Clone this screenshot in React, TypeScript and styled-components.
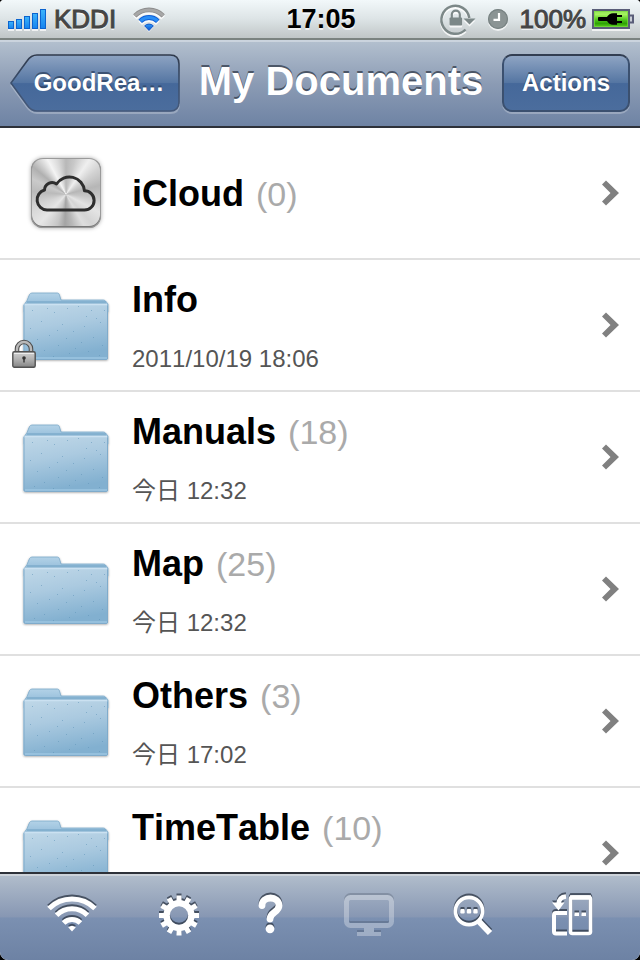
import React from "react";
import styled, { createGlobalStyle, css } from "styled-components";

const GlobalStyle = createGlobalStyle`
  *, *::before, *::after { box-sizing: border-box; }
  body { margin: 0; background: #000; }
  button { font: inherit; font-kerning: inherit; color: inherit; border: 0; padding: 0; background: none; cursor: pointer; }
`;

const Screen = styled.div`
  display: flex;
  flex-direction: column;
  height: 100vh;
  overflow: hidden;
  border-radius: 4px 4px 8px 8px;
  background: #fff;
  font-family: "Liberation Sans", Arial, "Noto Sans CJK JP", sans-serif;
`;

/* ---------- status bar ---------- */

const StatusBar = styled.div`
  flex: none;
  display: grid;
  grid-template-columns: 1fr auto 1fr;
  align-items: center;
  height: 40px;
  padding: 0 6px 0 8px;
  background: linear-gradient(#f2f8fa, #dde4e6 50%, #c0c6c7);
  border-bottom: 2px solid #7b8380;
`;

const StatusGroup = styled.div<{ $end?: boolean }>`
  display: flex;
  align-items: center;
  justify-content: ${(p) => (p.$end ? "flex-end" : "flex-start")};
  gap: ${(p) => (p.$end ? 0 : 8)}px;
  svg { display: block; flex: none; overflow: visible; }
`;

const StatusText = styled.span`
  font-size: 26px;
  line-height: 38px;
  color: #454545;
  -webkit-text-stroke: 1px #454545;
  text-shadow: 0 2px 0 rgba(255, 255, 255, 0.7);
`;

const Clock = styled.span`
  font-size: 27px;
  font-weight: bold;
  line-height: 38px;
  color: #000;
  text-shadow: 0 2px 0 rgba(255, 255, 255, 0.7);
`;

/* ---------- navigation bar ---------- */

const NavBar = styled.header`
  flex: none;
  display: flex;
  align-items: flex-start;
  height: 88px;
  padding: 12px 10px 0;
  background: linear-gradient(#b2bfce, #8b9bb4 50%, #6e83a4);
  border-top: 2px solid #cbd4de;
  border-bottom: 2px solid #2d3139;
`;

const Title = styled.h1`
  flex: 1;
  margin: 0;
  text-align: center;
  white-space: nowrap;
  font-size: 40px;
  line-height: 54px;
  font-weight: bold;
  color: #fff;
  text-shadow: 0 -2px 0 rgba(50, 60, 75, 0.75);
`;

const navText = css`
  flex: none;
  height: 58px;
  font-size: 24px;
  font-weight: bold;
  line-height: 56px;
  color: #fff;
  text-shadow: 0 -2px 0 rgba(45, 65, 95, 0.75);
`;

const ActionButton = styled.button`
  && {
    ${navText}
    width: 128px;
    border: 2px solid #3b506f;
    border-top-color: #323e52;
    border-radius: 10px;
    line-height: 52px;
    background: linear-gradient(#8ea4c3, #5475a2 50%, #45689a 51%, #4b6d9d);
    box-shadow: 0 2px 0 rgba(255, 255, 255, 0.25);
  }
`;

const BackButton = styled.button`
  && {
    ${navText}
    position: relative;
    width: 170px;
    padding: 0 14px 0 22px;
  }
  svg { position: absolute; inset: 0; overflow: visible; }
  span { position: relative; }
`;

/* ---------- list ---------- */

const List = styled.ul`
  flex: 1;
  min-height: 0;
  margin: 0;
  padding: 0;
  list-style: none;
  overflow-y: auto;
  scrollbar-width: none;
`;

const Row = styled.li`
  border-bottom: 2px solid #e0e0e0;
`;

const RowButton = styled.button`
  && {
    display: grid;
    grid-template-columns: 132px 1fr 40px;
    align-items: center;
    width: 100%;
    height: 130px;
    text-align: left;
  }
`;

const IconCell = styled.span`
  display: flex;
  justify-content: center;
`;

const IconFrame = styled.span`
  position: relative;
  svg { display: block; overflow: visible; }
`;

const LockBadge = styled.span`
  position: absolute;
  left: -8px;
  bottom: -5px;
`;

const CloudTile = styled.span`
  display: block;
  width: 70px;
  height: 70px;
  border-radius: 12px;
  background: conic-gradient(
    from 0deg at 50% 52%,
    #b8b8b8 0deg, #c8c8c8 14deg, #efefef 34deg, #d2d2d2 52deg, #b6b6b6 75deg, #c6c6c6 95deg,
    #e4e4e4 118deg, #d4d4d4 138deg, #dedede 150deg, #b8b8b8 168deg, #a4a4a4 182deg, #c6c6c6 196deg,
    #e6e6e6 222deg, #d4d4d4 250deg, #bababa 275deg, #cacaca 295deg, #b0b0b0 310deg, #f4f4f4 332deg,
    #dadada 346deg, #b8b8b8 360deg
  );
  box-shadow: inset 0 0 0 1px #9a9a9a, inset 0 -1px 0 1px #777, 0 0 4px rgba(0, 0, 0, 0.35);
`;

const Labels = styled.span`
  display: flex;
  flex-direction: column;
  gap: 22px;
  padding-top: 2px;
  white-space: nowrap;
  font-kerning: none;
`;

const Name = styled.span`
  font-size: 36px;
  line-height: 44px;
  font-weight: bold;
  color: #000;
`;

const Count = styled.span`
  margin-left: 12px;
  font-size: 34px;
  font-weight: normal;
  color: #aaa;
`;

const Stamp = styled.span`
  min-height: 30px;
  font-size: 24px;
  line-height: 30px;
  color: #555;
`;

/* ---------- bottom toolbar ---------- */

const Toolbar = styled.footer`
  flex: none;
  display: flex;
  align-items: center;
  justify-content: space-between;
  height: 88px;
  padding: 0 48px 4px 46px;
  border-top: 2px solid #2d3139;
  box-shadow: inset 0 2px 0 #cdd3da;
  background: linear-gradient(#b2becc, #8797b3 50%, #7b90b1 51%, #6d82a4);
`;

const ToolButton = styled.button`
  svg {
    display: block;
    overflow: visible;
    filter: drop-shadow(0 -2px 0 rgba(50, 60, 75, 0.8));
  }
  &:disabled { opacity: 0.3; cursor: default; }
`;

/* ---------- drawings ---------- */

const SignalBars = () => (
  <svg width="38" height="22" viewBox="0 0 38 22" aria-label="Signal">
    <defs>
      <linearGradient id="sig" x1="0" y1="0" x2="0" y2="1">
        <stop offset="0" stopColor="#3cb4fb" />
        <stop offset="1" stopColor="#1583ee" />
      </linearGradient>
    </defs>
    {[8, 10, 13, 16, 20].map((h, i) => (
      <g key={h}>
        <rect x={i * 8} y={23 - h} width="6" height={h} fill="#fff" opacity=".7" />
        <rect x={i * 8 + 0.5} y={21.5 - h} width="5" height={h - 1} fill="url(#sig)" stroke="#0b64cf" />
      </g>
    ))}
  </svg>
);

const StatusWifi = () => (
  <svg width="34" height="26" viewBox="0 0 34 26" aria-label="Wi-Fi">
    <defs>
      <linearGradient id="wf" x1="0" y1="0" x2="0" y2="1">
        <stop offset="0" stopColor="#2f9cf8" />
        <stop offset="1" stopColor="#0a50cd" />
      </linearGradient>
    </defs>
    <g fill="none" stroke="#fff" strokeWidth="5" opacity=".8" transform="translate(0 2)">
      <path d="M2.8 9.8A20 20 0 0 1 31.2 9.8" />
      <path d="M8.2 15.2A12.5 12.5 0 0 1 25.8 15.2" />
    </g>
    <path d="M2.8 9.8A20 20 0 0 1 31.2 9.8" fill="none" stroke="#8c8c8c" strokeWidth="4.6" />
    <path d="M2.8 9.8A20 20 0 0 1 31.2 9.8" fill="none" stroke="#a7a7a7" strokeWidth="3" />
    <path d="M8.2 15.2A12.5 12.5 0 0 1 25.8 15.2" fill="none" stroke="#0f5fd8" strokeWidth="5" />
    <path d="M8.6 14.8A12.5 12.5 0 0 1 25.4 14.8" fill="none" stroke="#2a8ef5" strokeWidth="3" />
    <path d="M17 26L11.2 19.6A8.4 8.4 0 0 1 22.8 19.6Z" fill="#fff" opacity=".8" />
    <path d="M17 24.5L12.6 19.8A6.4 6.4 0 0 1 21.4 19.8Z" fill="url(#wf)" stroke="#0b50c4" />
  </svg>
);

const OrientationLock = () => (
  <svg width="36" height="32" viewBox="0 0 36 32" aria-label="Orientation lock">
    {["#fff", "#7c8888"].map((c, i) => (
      <g key={c} transform={`translate(0 ${i ? 0 : 2})`} opacity={i ? 1 : 0.8}>
        <path d="M25.5 26.5A14 14 0 1 1 29.3 15" fill="none" stroke={c} strokeWidth="2.5" />
        <path d="M23.5 15.5H35.5L29.5 21.5Z" fill={c} />
        <path d="M11.8 15V11.6A4 4 0 0 1 19.8 11.6V15" fill="none" stroke={c} strokeWidth="2.2" />
        <rect x="9.5" y="14.5" width="12.6" height="8" rx="1" fill={c} />
      </g>
    ))}
  </svg>
);

const AlarmClock = () => (
  <svg width="44" height="22" viewBox="0 0 44 22" aria-label="Alarm">
    <circle cx="22" cy="13" r="10" fill="#fff" opacity=".7" />
    <circle cx="22" cy="11" r="10" fill="#8b9494" />
    <circle cx="22" cy="11" r="9.4" fill="none" stroke="#788383" strokeWidth="1.2" />
    <path d="M23 5V11.8H17.5" fill="none" stroke="#fff" strokeWidth="2.2" />
  </svg>
);

const Battery = () => (
  <svg width="48" height="22" viewBox="0 0 48 22" aria-label="Battery charging">
    <defs>
      <linearGradient id="bat" x1="0" y1="0" x2="0" y2="1">
        <stop offset="0" stopColor="#8ee256" />
        <stop offset=".25" stopColor="#a5f25f" />
        <stop offset=".55" stopColor="#4ec41c" />
        <stop offset=".75" stopColor="#2fa206" />
        <stop offset="1" stopColor="#63dc24" />
      </linearGradient>
    </defs>
    <rect x="6" y="3" width="38" height="20" fill="#fff" opacity=".7" />
    <rect x="7" y="2" width="36" height="18" fill="url(#bat)" stroke="#595d78" strokeWidth="2" />
    <rect x="8.5" y="3.5" width="33" height="15" fill="none" stroke="#79d840" opacity=".7" />
    <path d="M44 7.5H47V14.5H44" fill="#c9ced6" stroke="#595d78" strokeWidth="2" />
    <path d="M12 9.5Q12 9 13 9H21Q23 5.5 27 5.2H31V7H36V9H31V13H36V15H31V16.8H27Q23 16.5 21 13H13Q12 13 12 12Z" fill="#000" />
  </svg>
);

const BackShape = () => (
  <svg width="170" height="58" viewBox="0 0 170 58" aria-hidden="true">
    <defs>
      <linearGradient id="bk" x1="0" y1="0" x2="0" y2="1">
        <stop offset="0" stopColor="#8ea4c3" />
        <stop offset=".5" stopColor="#5475a2" />
        <stop offset=".51" stopColor="#45689a" />
        <stop offset="1" stopColor="#4b6d9d" />
      </linearGradient>
      <linearGradient id="bkl" x1="0" y1="0" x2="0" y2="1">
        <stop offset="0" stopColor="#303a4c" />
        <stop offset=".5" stopColor="#3b506f" />
        <stop offset="1" stopColor="#45597a" />
      </linearGradient>
    </defs>
    <path d="M1 31L17 53Q21 59 27 59H160Q169 59 169 50" fill="none" stroke="#fff" strokeWidth="2" opacity=".25" />
    <path d="M1 29L17 7Q21 1 27 1H160Q169 1 169 10V48Q169 57 160 57H27Q21 57 17 51Z" fill="url(#bk)" stroke="url(#bkl)" strokeWidth="1.6" />
  </svg>
);

const SPECKS: [number, number][] = [
  [12, 20], [21, 31], [34, 22], [47, 18], [58, 16], [71, 20], [80, 32], [76, 28], [64, 36], [53, 41],
  [42, 34], [29, 45], [17, 49], [10, 38], [24, 60], [38, 55], [49, 63], [61, 52], [73, 47], [82, 55],
  [68, 61], [55, 58], [14, 64], [33, 66], [79, 65], [46, 48], [66, 26], [27, 18], [37, 40], [84, 20],
];

const Folder = () => (
  <svg width="92" height="76" viewBox="0 -3 92 76" aria-hidden="true">
    <defs>
      <linearGradient id="ff" x1="0" y1="0" x2=".25" y2="1">
        <stop offset="0" stopColor="#c0d8e8" />
        <stop offset=".45" stopColor="#abcae0" />
        <stop offset="1" stopColor="#82b0d0" />
      </linearGradient>
      <linearGradient id="fb" x1="0" y1="0" x2="0" y2="1">
        <stop offset="0" stopColor="#b3d2e7" />
        <stop offset="1" stopColor="#82b1d3" />
      </linearGradient>
      <filter id="fs" x="-10%" y="-10%" width="120%" height="120%">
        <feDropShadow dx="0" dy="1" stdDeviation="1.2" floodColor="#000" floodOpacity=".4" />
      </filter>
    </defs>
    <g filter="url(#fs)">
      <path d="M4 15L7 10.5L9.5 4.5Q10.500 3 12 3H37.5Q39 3 39.5 5L41 10H83.5Q85 10 86 11.5L88 14V22H4Z" fill="url(#fb)" stroke="#7ca9c9" strokeWidth=".8" />
      <rect x="3.5" y="13.5" width="84.5" height="56" rx="1.5" fill="url(#ff)" />
    </g>
    <path d="M7 12H86" stroke="#6d9fc2" strokeWidth="1" />
    <rect x="4" y="14" width="83.5" height="55.5" rx="1.5" fill="none" stroke="#7fabcb" strokeWidth="1" />
    <path d="M4.500 14.5H87" stroke="#cbe1f1" strokeWidth="1.4" />
    <path d="M5 68H87" stroke="#a9d0ea" strokeWidth="1" />
    {SPECKS.map(([x, y]) => (
      <rect key={`${x}-${y}`} x={x} y={y} width="1" height="1" fill="#5f93b8" opacity=".55" />
    ))}
  </svg>
);

const LockIcon = () => (
  <svg width="24" height="28" viewBox="0 0 24 28" aria-label="Locked">
    <defs>
      <linearGradient id="lk" x1="0" y1="0" x2="0" y2="1">
        <stop offset="0" stopColor="#d2d2d2" />
        <stop offset=".5" stopColor="#b0b0b0" />
        <stop offset="1" stopColor="#858585" />
      </linearGradient>
    </defs>
    <path d="M5 13V9A7 7 0 0 1 19 9V13" fill="none" stroke="#4f4f4f" strokeWidth="4.6" />
    <path d="M5 13V9A7 7 0 0 1 19 9V13" fill="none" stroke="#b9b9b9" strokeWidth="2.4" />
    <rect x=".8" y="11.8" width="22.4" height="15.4" rx="1.5" fill="url(#lk)" stroke="#525252" strokeWidth="1.4" />
    <path d="M2 13.500H22" stroke="#ededed" />
    <circle cx="12" cy="18" r="1.8" fill="#333" />
    <path d="M12 18V22.500" stroke="#333" strokeWidth="1.4" />
  </svg>
);

const Cloud = () => (
  <CloudTile>
    <svg width="70" height="70" viewBox="0 0 70 70" aria-hidden="true">
      <path
        d="M16 52H53.5A9.600 9.600 0 0 0 53.5 32.8A15.200 15.200 0 0 0 25.5 26A7.600 7.600 0 0 0 13.5 32A10.200 10.200 0 0 0 16 52Z"
        fill="none" stroke="#2e2e2e" strokeWidth="3" strokeLinejoin="round"
      />
    </svg>
  </CloudTile>
);

const Chevron = () => (
  <svg width="20" height="26" viewBox="0 0 20 26" aria-hidden="true">
    <path d="M2 4.500L6 .5L19 13L6 25.500L2 21.500L10.500 13Z" fill="#808080" />
  </svg>
);

const WifiIcon = () => (
  <svg width="54" height="44" viewBox="0 0 54 44" aria-hidden="true">
    <g fill="none" stroke="#fff" strokeWidth="5">
      <path d="M3 15.600A32.500 32.500 0 0 1 49 15.600" />
      <path d="M10.600 22.200A21.800 21.800 0 0 1 41.400 22.200" />
      <path d="M17.600 30A11.900 11.900 0 0 1 34.400 30" />
    </g>
    <path d="M22.200 34.200Q26 31.200 29.800 34.200L26 38.500Z" fill="#fff" />
  </svg>
);

const GearIcon = () => (
  <svg width="40" height="44" viewBox="0 0 40 44" aria-hidden="true">
    <circle cx="20" cy="22.500" r="12.400" fill="none" stroke="#fff" strokeWidth="6.400" />
    {Array.from({ length: 12 }, (_, i) => (
      <rect key={i} x="17.500" y="2.500" width="5" height="6" fill="#fff" transform={`rotate(${i * 30} 20 22.500)`} />
    ))}
  </svg>
);

const HelpIcon = () => (
  <svg width="26" height="44" viewBox="0 0 26 44" aria-hidden="true">
    <path d="M4 12.500C4 2.500 21 2.500 21 12.500C21 19.500 12 19 12 26" fill="none" stroke="#fff" strokeWidth="6.800" strokeLinecap="round" />
    <circle cx="12" cy="35.800" r="4.400" fill="#fff" />
  </svg>
);

const MonitorIcon = () => (
  <svg width="50" height="44" viewBox="0 0 50 44" aria-hidden="true">
    <rect x="2.500" y="4.500" width="45" height="28" rx="4" fill="none" stroke="#fff" strokeWidth="5" />
    <path d="M20 34H30V39H37V43H13V39H20Z" fill="#fff" />
  </svg>
);

const SearchIcon = () => (
  <svg width="40" height="44" viewBox="0 0 40 44" aria-hidden="true">
    <circle cx="16" cy="18" r="13.600" fill="none" stroke="#fff" strokeWidth="3.600" />
    <path d="M26 28.500L37 40" stroke="#fff" strokeWidth="6" />
    {[9.5, 16, 22.5].map((x) => (
      <rect key={x} x={x - 2.2} y="16" width="4.400" height="4.400" rx="1" fill="#fff" />
    ))}
  </svg>
);

const RotateIcon = () => (
  <svg width="40" height="44" viewBox="0 0 40 44" aria-hidden="true">
    <rect x="18.500" y="4" width="20" height="36.500" rx="2" fill="none" stroke="#fff" strokeWidth="3.600" />
    <path d="M18 4.500H39" stroke="#fff" strokeWidth="4.500" />
    <rect x="22.500" y="19.500" width="4.500" height="3.500" fill="#fff" />
    <rect x="29.500" y="19.500" width="4.500" height="3.500" fill="#fff" />
    <path d="M15 20H4Q2 20 2 22V38.500Q2 40.500 4 40.500H15" fill="none" stroke="#fff" strokeWidth="4" />
    <path d="M14 3.500Q7 4 6.500 11" fill="none" stroke="#fff" strokeWidth="4.400" />
    <path d="M0 9.500L12.500 9.500L6.500 17.500Z" fill="#fff" />
  </svg>
);

/* ---------- data ---------- */

type Entry = { name: string; count?: number; stamp?: string; cloud?: boolean; locked?: boolean };

const ENTRIES: Entry[] = [
  { name: "iCloud", count: 0, cloud: true },
  { name: "Info", stamp: "2011/10/19 18:06", locked: true },
  { name: "Manuals", count: 18, stamp: "今日 12:32" },
  { name: "Map", count: 25, stamp: "今日 12:32" },
  { name: "Others", count: 3, stamp: "今日 17:02" },
  { name: "TimeTable", count: 10, stamp: "" },
];

const TOOLS = [
  { label: "Wi-Fi transfer", Icon: WifiIcon },
  { label: "Settings", Icon: GearIcon },
  { label: "Help", Icon: HelpIcon },
  { label: "External display", Icon: MonitorIcon, disabled: true },
  { label: "Search", Icon: SearchIcon },
  { label: "Rotation lock", Icon: RotateIcon },
];

const EntryRow = ({ entry }: { entry: Entry }) => (
  <Row>
    <RowButton type="button">
      <IconCell>
        <IconFrame>
          {entry.cloud ? <Cloud /> : <Folder />}
          {entry.locked && <LockBadge><LockIcon /></LockBadge>}
        </IconFrame>
      </IconCell>
      <Labels>
        <Name>
          {entry.name}
          {entry.count !== undefined && <Count>({entry.count})</Count>}
        </Name>
        {entry.stamp !== undefined && <Stamp>{entry.stamp}</Stamp>}
      </Labels>
      <Chevron />
    </RowButton>
  </Row>
);

export default function App() {
  return (
    <>
      <GlobalStyle />
      <Screen>
        <StatusBar>
          <StatusGroup>
            <SignalBars />
            <StatusText>KDDI</StatusText>
            <span />
            <StatusWifi />
          </StatusGroup>
          <Clock>17:05</Clock>
          <StatusGroup $end>
            <OrientationLock />
            <AlarmClock />
            <StatusText>100%</StatusText>
            <Battery />
          </StatusGroup>
        </StatusBar>
        <NavBar>
          <BackButton type="button">
            <BackShape />
            <span>GoodRea…</span>
          </BackButton>
          <Title>My Documents</Title>
          <ActionButton type="button">Actions</ActionButton>
        </NavBar>
        <List>
          {ENTRIES.map((entry) => (
            <EntryRow key={entry.name} entry={entry} />
          ))}
        </List>
        <Toolbar>
          {TOOLS.map(({ label, Icon, disabled }) => (
            <ToolButton key={label} type="button" aria-label={label} disabled={disabled}>
              <Icon />
            </ToolButton>
          ))}
        </Toolbar>
      </Screen>
    </>
  );
}
